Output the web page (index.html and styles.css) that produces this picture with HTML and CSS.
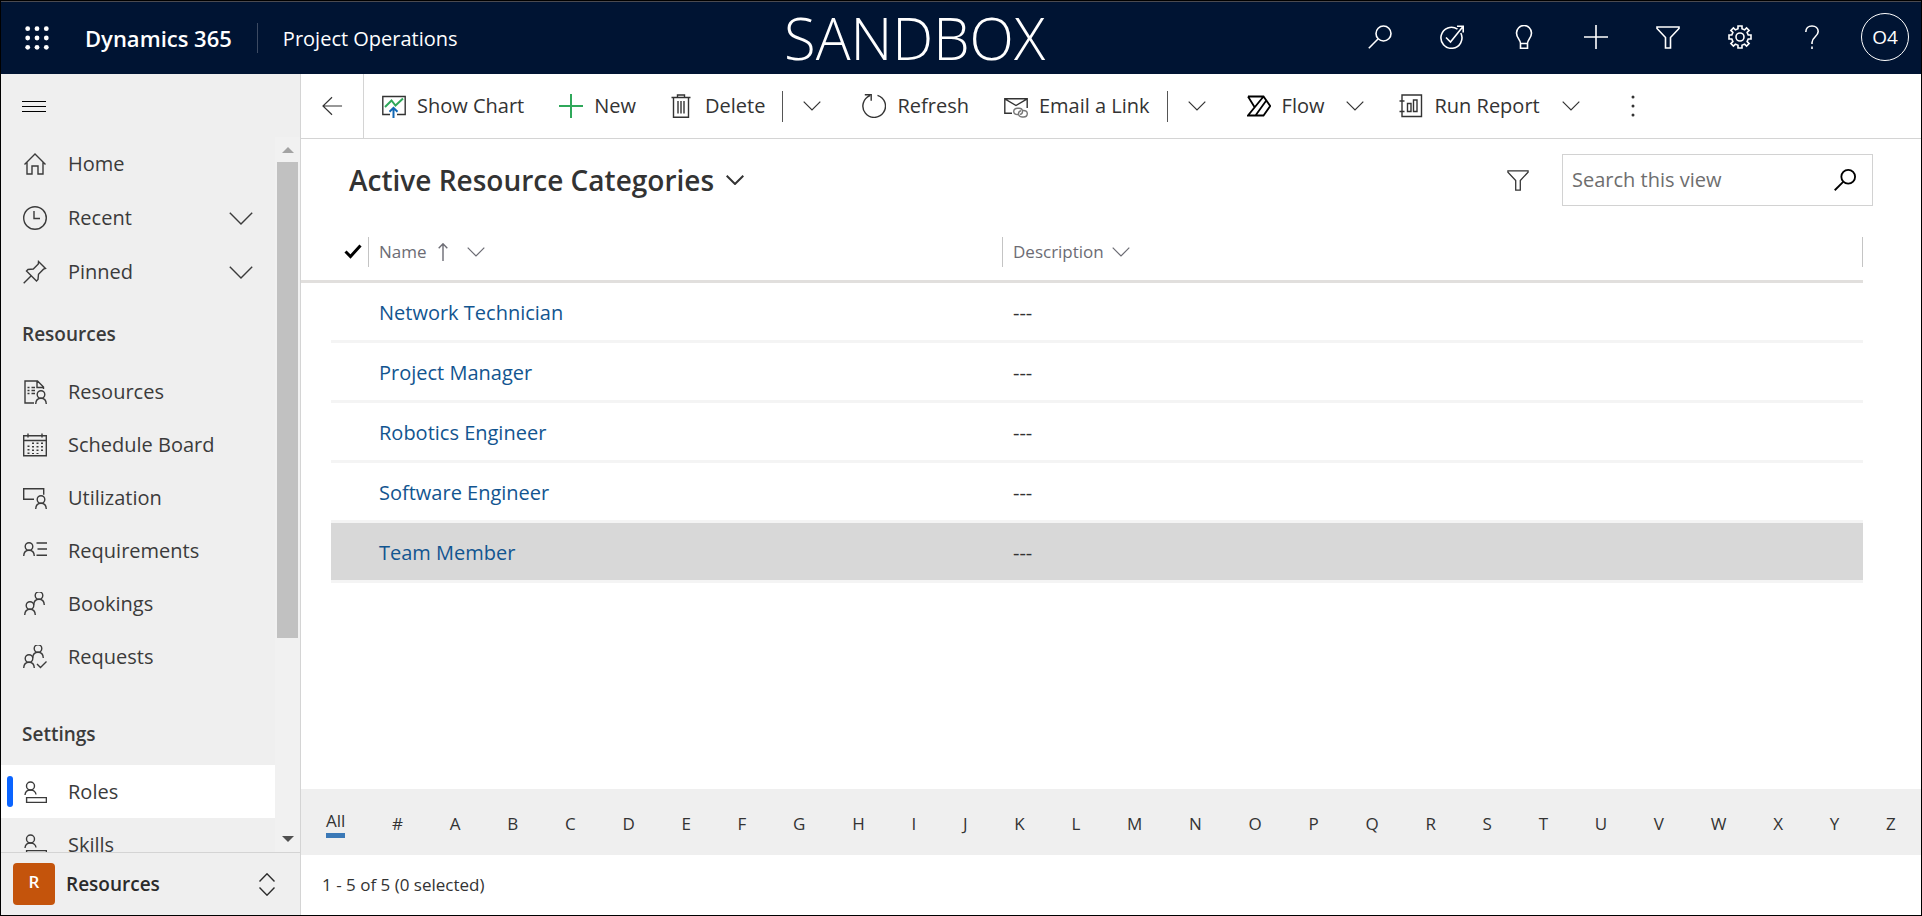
FILE: index.html
```html
<!DOCTYPE html>
<html lang="en">
<head>
<meta charset="utf-8">
<title>Active Resource Categories - Dynamics 365</title>
<link rel="stylesheet" href="styles.css">
</head>
<body>
<svg class="defs" aria-hidden="true">
  <symbol id="chev" viewBox="0 0 18 10"><path d="M.7.7 9 9 17.3.7"/></symbol>
  <symbol id="chev-lg" viewBox="0 0 24 13"><path d="M.8.8 12 12 23.2.8"/></symbol>
  <symbol id="person" viewBox="0 0 12 14"><circle cx="6" cy="4.5" r="3.8"/><path d="M.7 14C.9 10.5 3 8.3 6 8.3s5.1 2.2 5.3 5.7"/></symbol>
  <symbol id="role" viewBox="0 0 24 24"><circle cx="7.500" cy="6" r="4"/><path d="M2 15c.2-3 2.500-5 5.500-5s5.300 2 5.500 4.500M3.600 17.600h19.800v4.800H3.600z"/></symbol>
  <symbol id="funnel" viewBox="0 0 24 24"><path d="M1 2h22v1.500L14.500 12.500V23h-5V12.500L1 3.500z"/></symbol>
  <symbol id="search" viewBox="0 0 24 24"><circle cx="15.500" cy="8.500" r="7.500"/><path d="M10 14 .8 23.200"/></symbol>
</svg>
<div class="app">
  <header class="topbar">
    <button class="waffle" aria-label="App launcher"><svg class="i24" viewBox="0 0 24 24"><g class="solid"><circle cx="2.700" cy="2.700" r="2.400"/><circle cx="12" cy="2.700" r="2.400"/><circle cx="21.300" cy="2.700" r="2.400"/><circle cx="2.700" cy="12" r="2.400"/><circle cx="12" cy="12" r="2.400"/><circle cx="21.300" cy="12" r="2.400"/><circle cx="2.700" cy="21.300" r="2.400"/><circle cx="12" cy="21.300" r="2.400"/><circle cx="21.300" cy="21.300" r="2.400"/></g></svg></button>
    <a class="brand" href="#">Dynamics 365</a>
    <a class="appname" href="#">Project Operations</a>
    <span class="sandbox">SANDBOX</span>
    <div class="tools">
      <button aria-label="Search"><svg class="i24"><use href="#search"/></svg></button>
      <button aria-label="Task flow"><svg class="i24" viewBox="0 0 24 24"><path d="M17.500 4.200A10.500 10.500 0 1 0 20.800 8M6 12.500l4.500 4.500L23 1.500M17 1.200h6.200v6.300"/></svg></button>
      <button aria-label="Assistant"><svg class="i24" viewBox="0 0 24 24"><path d="M8.500 18.500c0-4-4-5.500-4-10.500a7.500 7.500 0 0 1 15 0c0 5-4 6.500-4 10.500zM8.500 18.500v4.700h7v-4.700"/></svg></button>
      <button aria-label="Quick create"><svg class="i24" viewBox="0 0 24 24"><path d="M12 0v24M0 12h24"/></svg></button>
      <button aria-label="Advanced find"><svg class="i24"><use href="#funnel"/></svg></button>
      <button aria-label="Settings"><svg class="i24" viewBox="0 0 24 24"><path d="M10 1h4v2.800l2.600 1.100 2-2 2.500 2.500-2 2 1.100 2.600H23v4h-2.800l-1.100 2.600 2 2-2.500 2.500-2-2-2.600 1.100V23h-4v-2.800l-2.600-1.100-2 2-2.500-2.500 2-2L3.800 14H1v-4h2.800l1.100-2.600-2-2 2.500-2.500 2 2L10 3.800z"/><circle cx="12" cy="12" r="4"/></svg></button>
      <button aria-label="Help"><svg class="i24" viewBox="0 0 24 24"><path d="M5.800 7c0-3.500 2.500-6 6.200-6s6.200 2.400 6.200 5.600c0 5-6.200 5.400-6.200 10.900v1.500M12 21.500V24"/></svg></button>
      <button class="avatar">O4</button>
    </div>
  </header>

  <div class="body">
    <aside class="sidebar">
      <button class="burger" aria-label="Collapse site map"><svg viewBox="0 0 24 12"><path d="M0 1.500h24M0 6.500h24M0 11.500h24"/></svg></button>
      <div class="scroller">
        <nav class="nav">
          <ul class="pinned-list">
            <li><a href="#"><svg class="i24" viewBox="0 0 24 24"><path d="M1.500 12.500 12 2l10.500 10.500M4 10.500V22h5v-8h6v8h5V10.500"/></svg>Home</a></li>
            <li><a href="#"><svg class="i24" viewBox="0 0 24 24"><circle cx="12" cy="12" r="11.300"/><path d="M11 5v7.500h6"/></svg>Recent<svg class="chev-lg"><use href="#chev-lg"/></svg></a></li>
            <li><a href="#"><svg class="i24" viewBox="0 0 24 24"><path d="m15.500 1.500 7 7-2 .7-5 5-.5 5.300-1.500 1.500-10-10L5 9.500l5.300-.5 5-5zM8.500 15.500.7 23.300"/></svg>Pinned<svg class="chev-lg"><use href="#chev-lg"/></svg></a></li>
          </ul>
          <h2>Resources</h2>
          <ul>
            <li><a href="#"><svg class="i24" viewBox="0 0 24 24"><path d="M11 23H2V1h12.500l6 6v2M14 1v6.500h6.500M4.500 7.500h2M8.500 7.500H12M4.500 10.500h2M8.500 10.500H12M4.500 13.500h2M8.500 13.500H12"/><use href="#person" x="12" y="10" width="12" height="14"/></svg>Resources</a></li>
            <li><a href="#"><svg class="i24" viewBox="0 0 24 24"><path d="M.7 2.700h22.600v20H.7zM.7 7.500h22.600M5 .5v4M19 .5v4"/><path class="dots" d="M10 9.500V21M14.500 9.500V21M19 9.500V18M5.500 12.500V21"/></svg>Schedule Board</a></li>
            <li><a href="#"><svg class="i24" viewBox="0 0 24 24"><path d="M11 13.300H.7V2.700h20v6"/><use href="#person" x="12" y="9" width="12" height="14"/></svg>Utilization</a></li>
            <li><a href="#"><svg class="i24" viewBox="0 0 24 24"><use href="#person" x="0" y="3" width="12" height="14"/><path d="M13.500 4H24M14.500 10H24M13.500 16.300H24"/></svg>Requirements</a></li>
            <li><a href="#"><svg class="i24" viewBox="0 0 24 24"><use href="#person" x="10" y="-1" width="12" height="14"/><use href="#person" x="1" y="9" width="12" height="14"/></svg>Bookings</a></li>
            <li><a href="#"><svg class="i24" viewBox="0 0 24 24"><use href="#person" x="9" y="-1" width="12" height="14"/><use href="#person" x="0" y="9" width="12" height="14"/><path d="m14 19 3.500 3.500 6-6"/></svg>Requests</a></li>
          </ul>
          <h2 class="later">Settings</h2>
          <ul>
            <li class="current"><a href="#" aria-current="page"><svg class="i24"><use href="#role"/></svg>Roles</a></li>
            <li><a href="#"><svg class="i24"><use href="#role"/></svg>Skills</a></li>
          </ul>
        </nav>
        <div class="scrollbar" aria-hidden="true"><i class="up"></i><i class="thumb"></i><i class="down"></i></div>
      </div>
      <button class="area"><span class="badge">R</span>Resources<svg class="updown" viewBox="0 0 16 23"><path d="m.5 8.500 7.500-7.700 7.500 7.700M.5 14.500 8 22.200l7.500-7.700"/></svg></button>
    </aside>

    <main class="main">
      <div class="commands">
        <button class="back" aria-label="Back"><svg viewBox="0 0 22 20"><path d="M21 10H1M10.500.8 1 10l9.500 9.200"/></svg></button>
        <button class="cmd"><svg class="i24" viewBox="0 0 24 24"><path d="M8 20.500H.8v-18h22.400v18H15"/><path class="green" d="m3 13 6.500-6.500 4 5 7.500-7"/><path class="blue" d="M11.500 24V14M7.500 17.800l4-4 4 4"/></svg>Show Chart</button>
        <button class="cmd"><svg class="i24" viewBox="0 0 24 24"><path class="green" d="M12 0v24M0 12h24"/></svg>New</button>
        <button class="cmd trash"><svg viewBox="0 0 20 24"><path d="M.5 3.500h19M6.500 3.500V1h7v2.500M2.500 3.500v19.700h15V3.500M7 7v12.500M10 7v12.500M13 7v12.500"/></svg>Delete</button>
        <button class="drop" aria-label="More delete options"><svg class="chev"><use href="#chev"/></svg></button>
        <button class="cmd"><svg class="i24" viewBox="0 0 24 24"><path d="M15.500 1.300A11.300 11.300 0 1 1 8 1.600M2.800.8h6.400v6"/></svg>Refresh</button>
        <button class="cmd"><svg class="i24" viewBox="0 0 24 24"><path d="M8 19.300H.8V4.800h22.400V14M.8 4.800 12 11.500l11.200-6.700"/><path class="grey" d="M14 20.500c-2.500.3-4.300-1-4.300-3s1.600-3.300 3.800-3.300h1.500c2.200 0 3.500 1.400 3.500 3.200 0 1.500-1 2.800-2.500 3M19 16.500c2.500-.2 4.300 1 4.300 3s-1.600 3.500-3.800 3.500H18c-2.200 0-3.500-1.500-3.500-3.200 0-1.500 1-2.800 2.500-3"/></svg>Email a Link</button>
        <button class="drop" aria-label="More email options"><svg class="chev"><use href="#chev"/></svg></button>
        <button class="cmd menu"><svg class="i24 bold" viewBox="0 0 24 24"><path d="M1 2.500h15.500l6.700 9.500-6.700 9.500H1L16.500 2.500M1 2.500l6.500 10.500M8.500 21.500l10.800-15"/></svg>Flow<svg class="chev"><use href="#chev"/></svg></button>
        <button class="cmd menu"><svg class="i24" viewBox="0 0 24 24"><path d="M3 1h19.500v21.500H3zM.5 7h5M.5 17.500h5M8.500 9.500H12v8H8.500zM14.500 6H18v11.500h-3.500z"/></svg>Run Report<svg class="chev"><use href="#chev"/></svg></button>
        <button class="more" aria-label="More commands"><svg viewBox="0 0 4 22"><g class="solid"><circle cx="2" cy="2" r="1.500"/><circle cx="2" cy="11" r="1.500"/><circle cx="2" cy="20" r="1.500"/></g></svg></button>
      </div>

      <div class="viewbar">
        <h1><button class="view">Active Resource Categories<svg class="chev"><use href="#chev"/></svg></button></h1>
        <button class="filter" aria-label="Filter"><svg class="i22"><use href="#funnel"/></svg></button>
        <form class="searchbox">
          <input type="text" aria-label="Search this view" placeholder="Search this view">
          <button type="button" aria-label="Search"><svg class="i22"><use href="#search"/></svg></button>
        </form>
      </div>

      <div class="gridwrap">
        <table class="grid">
          <colgroup><col class="c-edge"><col class="c-check"><col class="c-name"><col></colgroup>
          <thead>
            <tr>
              <th></th>
              <th><svg class="tick" viewBox="0 0 18 15"><path d="m1.500 7.500 5 5L16.500 1.500"/></svg></th>
              <th><div class="head">Name<svg class="sort" viewBox="0 0 10 18"><path d="M5 18V1M.7 5.200 5 .8l4.300 4.400"/></svg><svg class="chev"><use href="#chev"/></svg></div></th>
              <th><div class="head last">Description<svg class="chev"><use href="#chev"/></svg></div></th>
            </tr>
          </thead>
          <tbody>
            <tr><td></td><td></td><td><a href="#">Network Technician</a></td><td>---</td></tr>
            <tr><td></td><td></td><td><a href="#">Project Manager</a></td><td>---</td></tr>
            <tr><td></td><td></td><td><a href="#">Robotics Engineer</a></td><td>---</td></tr>
            <tr><td></td><td></td><td><a href="#">Software Engineer</a></td><td>---</td></tr>
            <tr class="hover"><td></td><td></td><td><a href="#">Team Member</a></td><td>---</td></tr>
          </tbody>
        </table>
      </div>

      <div class="jumpbar">
        <button class="on">All</button><button>#</button><button>A</button><button>B</button><button>C</button><button>D</button><button>E</button><button>F</button><button>G</button><button>H</button><button>I</button><button>J</button><button>K</button><button>L</button><button>M</button><button>N</button><button>O</button><button>P</button><button>Q</button><button>R</button><button>S</button><button>T</button><button>U</button><button>V</button><button>W</button><button>X</button><button>Y</button><button>Z</button>
      </div>
      <div class="status">1 - 5 of 5 (0 selected)</div>
    </main>
  </div>
</div>
</body>
</html>
```

FILE: styles.css
```css
* { box-sizing: border-box; }
body { margin: 0; font-family: "Open Sans", "Noto Sans", sans-serif; font-size: 20px; line-height: 28px; color: #333; }
button { margin: 0; padding: 0; border: 0; background: none; color: inherit; font: inherit; cursor: pointer; }
a { color: inherit; text-decoration: none; }
h1, h2, ul { margin: 0; padding: 0; font-weight: 400; }
ul { list-style: none; }
svg { display: block; flex: none; fill: none; stroke: currentColor; stroke-width: 1.4; }
.defs { position: absolute; width: 0; height: 0; }
.solid { fill: currentColor; stroke: none; }
.i24 { width: 24px; height: 24px; }
.i22 { width: 22px; height: 22px; }
.chev { width: 18px; height: 10px; stroke-width: 1.2; }
.chev-lg { width: 24px; height: 13px; margin-left: auto; }
.green { stroke: #2fa85a; stroke-width: 2; }
.blue { stroke: #1267b4; stroke-width: 2; }
.grey { stroke: #777; }
.bold { stroke: #000; stroke-width: 1.8; }
.dots { stroke-width: 2; stroke-dasharray: 1.5 2; }

.app { display: flex; flex-direction: column; height: 100vh; border: 1px solid #000; background: #fff; }

.topbar { display: flex; align-items: center; flex: none; position: relative; height: 73px; padding: 0 12px 0 24px; border-top: 1px solid #4a4a50; background: #001433; color: #fff; }
.waffle { margin-right: 36px; }
.brand { padding-right: 25px; font-size: 22px; font-weight: 600; line-height: 30px; border-right: 1px solid #3c4a62; }
.appname { padding: 2px 0 0 25px; }
.sandbox { position: absolute; left: 783px; top: 0; font-size: 58px; font-weight: 300; line-height: 72px; }
.tools { display: flex; align-items: center; margin-left: auto; padding-bottom: 2px; }
.tools button { display: flex; justify-content: center; width: 72px; }
.tools svg { stroke-width: 1.6; }
.tools .avatar { align-items: center; width: 48px; height: 48px; margin-left: 13px; border: 1px solid #fff; border-radius: 50%; font-size: 19px; }

.body { display: flex; flex: 1; min-height: 0; }

.sidebar { display: flex; flex-direction: column; flex: none; width: 300px; border-right: 1px solid #d4d4d4; background: #efefef; color: #3b3b3b; }
.burger { align-self: flex-start; height: 63px; padding-left: 21px; color: #000; }
.burger svg { width: 24px; height: 12px; stroke-width: 1; }
.scroller { display: flex; flex: 1; min-height: 0; }
.nav { flex: 1; overflow: hidden; }
.nav a { display: flex; align-items: center; gap: 21px; height: 53px; padding: 0 22px; }
.nav .pinned-list a { height: 54px; }
.nav h2 { margin-top: 4px; padding: 17px 21px; font-size: 19px; font-weight: 600; line-height: 28px; }
.nav h2.later { margin-top: 20px; }
.nav .current { position: relative; background: #fff; }
.current::before { content: ""; position: absolute; left: 6px; top: 11px; width: 6px; height: 31px; border-radius: 3px; background: #0a64ff; }
.scrollbar { display: flex; flex-direction: column; align-items: center; width: 25px; padding: 10px 1px; background: #f1f1f1; }
.up, .down { border: 6px solid transparent; border-top: 0; border-bottom-color: #a3a3a3; }
.thumb { width: 21px; height: 476px; margin: 9px 0 auto; background: #c1c1c1; }
.down { border-top: 6px solid #505050; border-bottom: 0; }
.area { display: flex; align-items: center; height: 63px; padding: 0 25px 0 12px; border-top: 1px solid #d4d4d4; color: #2b2b2b; font-size: 19px; font-weight: 600; }
.badge { display: flex; align-items: center; justify-content: center; width: 42px; height: 42px; margin-right: 11px; padding-bottom: 4px; border-radius: 4px; background: #c4540c; color: #fff; font-size: 17px; }
.updown { width: 16px; height: 23px; margin-left: auto; }

.main { display: flex; flex-direction: column; flex: 1; min-width: 0; }
.commands { display: flex; align-items: center; flex: none; height: 65px; border-bottom: 1px solid #d4d4d4; }
.back { align-self: stretch; width: 63px; padding: 0 21px; border-right: 1px solid #d4d4d4; }
.back svg { width: 21px; height: 20px; stroke-width: 1.2; }
.cmd { display: flex; align-items: center; gap: 11px; margin-left: 18px; margin-right: 17px; white-space: nowrap; }
.trash svg { width: 20px; height: 24px; }
.trash { gap: 14px; }
.menu .chev { margin-left: 11px; }
.drop { display: flex; align-items: center; height: 31px; margin-right: 23px; padding-left: 20px; border-left: 1px solid #555; }
.more { margin-left: 34px; }
.more svg { width: 4px; height: 22px; }

.viewbar { display: flex; align-items: center; flex: none; padding: 15px 48px 0; }
.view { display: flex; align-items: center; gap: 12px; font-size: 28px; font-weight: 600; line-height: 36px; }
.view .chev { stroke-width: 2; }
.filter { margin-left: auto; margin-right: 33px; }
.searchbox { display: flex; align-items: center; width: 311px; height: 52px; padding-right: 16px; border: 1px solid #d2d2d2; color: #000; }
.searchbox input { flex: 1; min-width: 0; padding: 0 9px; border: 0; outline: 0; background: none; font: inherit; }
.searchbox input::placeholder { color: #6e6e6e; opacity: 1; }
.searchbox svg { stroke-width: 2; }

.gridwrap { flex: 1; min-height: 0; padding: 20px 58px 0 0; }
.grid { width: 100%; border-collapse: separate; border-spacing: 0; table-layout: fixed; }
.c-edge { width: 30px; }
.c-check { width: 37px; }
.c-name { width: 634px; }
.grid th { height: 57px; padding: 0 0 3px; border-bottom: 3px solid #e1dfdd; font-size: 17px; font-weight: 400; text-align: left; color: #6c6c74; }
.head { display: flex; align-items: center; height: 30px; padding-left: 10px; border-left: 1px solid #c4c4c4; }
.head.last { border-right: 1px solid #c4c4c4; gap: 8px; }
.sort { width: 10px; height: 18px; margin: 0 19px 0 11px; }
.tick { width: 18px; height: 15px; margin-left: 13px; stroke: #000; stroke-width: 3; }
.grid td { height: 60px; padding: 2px 11px 0; border-bottom: 3px solid #f4f4f4; }
.grid td:first-child { border-bottom-color: transparent; }
.grid td a { color: #125590; }
.hover td:not(:first-child) { background: #d8d8d8; }

.jumpbar { display: flex; align-items: center; justify-content: space-between; flex: none; height: 66px; padding: 4px 25px 0; background: #efefef; font-size: 17px; }
.jumpbar .on { margin-bottom: 2px; border-bottom: 5px solid #3b79b7; line-height: 24px; }
.status { flex: none; height: 60px; padding: 16px 21px; font-size: 17px; }
```
